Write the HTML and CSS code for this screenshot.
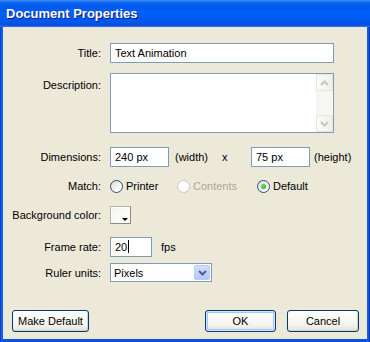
FILE: index.html
```html
<!DOCTYPE html>
<html lang="en">
<head>
    <meta charset="UTF-8">
    <meta name="viewport" content="width=device-width, initial-scale=1.0">
    <title>Document Properties</title>
    <link rel="stylesheet" href="styles.css">
</head>
<body>
    <div class="window">
        <div class="titlebar">Document Properties</div>

        <div class="client">
            <div class="row row-title">
                <span class="label">Title:</span>
                <div class="field wide">Text Animation</div>
            </div>

            <div class="row row-desc">
                <span class="label label-top">Description:</span>
                <div class="field wide area">
                    <div class="scrollbar">
                        <div class="sb-btn">
                            <svg width="9" height="6" viewBox="0 0 9 6"><path d="M1 5 L4.5 1.5 L8 5" fill="none" stroke="#c9c7ba" stroke-width="2"/></svg>
                        </div>
                        <div class="sb-track"></div>
                        <div class="sb-btn">
                            <svg width="9" height="6" viewBox="0 0 9 6"><path d="M1 1 L4.5 4.5 L8 1" fill="none" stroke="#c9c7ba" stroke-width="2"/></svg>
                        </div>
                    </div>
                </div>
            </div>

            <div class="row row-dim">
                <span class="label">Dimensions:</span>
                <div class="field small">240 px</div>
                <span class="unit">(width)</span>
                <span class="times">x</span>
                <div class="field small">75 px</div>
                <span class="unit-h">(height)</span>
            </div>

            <div class="row row-match">
                <span class="label">Match:</span>
                <div class="option opt-printer">
                    <span class="radio"></span>Printer
                </div>
                <div class="option opt-contents disabled">
                    <span class="radio"></span>Contents
                </div>
                <div class="option">
                    <span class="radio checked"></span>Default
                </div>
            </div>

            <div class="row row-bg">
                <span class="label">Background color:</span>
                <div class="swatch"><span class="swatch-arrow"></span></div>
            </div>

            <div class="row row-fps">
                <span class="label">Frame rate:</span>
                <div class="field tiny">20<span class="caret"></span></div>
                <span class="fps">fps</span>
            </div>

            <div class="row row-ruler">
                <span class="label">Ruler units:</span>
                <div class="select">
                    <span class="select-text">Pixels</span>
                    <span class="select-btn">
                        <svg width="9" height="6" viewBox="0 0 9 6"><path d="M1 1 L4.5 4.5 L8 1" fill="none" stroke="#4d6185" stroke-width="2"/></svg>
                    </span>
                </div>
            </div>

            <div class="buttons">
                <div class="btn btn-make">Make Default</div>
                <div class="btn-group">
                    <div class="btn btn-ok">OK</div>
                    <div class="btn btn-cancel">Cancel</div>
                </div>
            </div>
        </div>
    </div>
</body>
</html>
```

FILE: styles.css
```css
body {
    margin: 0;
    font-family: "Liberation Sans", Arial, sans-serif;
    font-size: 11px;
    color: #000;
    background-color: #ece9d8;
}

.window {
    width: 370px;
    height: 342px;
    display: flex;
    flex-direction: column;
    background: linear-gradient(to right, #0831d9 0, #166aee 2px, #0855dd 3px, #0855dd 367px, #166aee 368px, #0022a8 370px);
}

.titlebar {
    height: 27px;
    line-height: 28px;
    padding-left: 6px;
    color: #fff;
    font-weight: bold;
    font-size: 13px;
    text-shadow: 1px 1px #0a1883;
    background: linear-gradient(#3b8cf5 0, #0a62ec 3px, #0058ee 7px, #0061f8 45%, #0057ec 80%, #0a4fe0 92%, #2f71f0 100%);
}

.client {
    flex: 1;
    margin: 0 3px 3px 3px;
    background-color: #ece9d8;
    padding-top: 16px;
    display: flex;
    flex-direction: column;
}

.row {
    display: flex;
    align-items: center;
}

.label {
    width: 98px;
    margin-right: 9px;
    text-align: right;
    white-space: nowrap;
}

.label-top {
    align-self: flex-start;
    padding-top: 6px;
}

.field {
    box-sizing: border-box;
    height: 20px;
    line-height: 18px;
    padding-left: 4px;
    border: 1px solid #7f9db9;
    background-color: #fff;
    white-space: nowrap;
}

.wide {
    width: 224px;
}

.small {
    width: 59px;
}

.tiny {
    width: 42px;
}

.area {
    position: relative;
    height: 60px;
}

.scrollbar {
    position: absolute;
    top: 0;
    right: 0;
    bottom: 0;
    width: 17px;
    display: flex;
    flex-direction: column;
    background-color: #f7f6f1;
}

.sb-btn {
    box-sizing: border-box;
    height: 17px;
    border: 1px solid #e8e6dc;
    border-radius: 2px;
    background: linear-gradient(to right, #fbfbf8, #f1efe7);
    display: flex;
    align-items: center;
    justify-content: center;
}

.sb-track {
    flex: 1;
}

.row-title {
    height: 20px;
}

.row-desc {
    margin-top: 10px;
}

.row-dim {
    margin-top: 14px;
}

.unit {
    width: 53px;
    padding-left: 6px;
    box-sizing: border-box;
}

.times {
    width: 29px;
}

.unit-h {
    margin-left: 4px;
}

.row-match {
    margin-top: 11px;
    height: 16px;
}

.option {
    display: flex;
    align-items: center;
}

.opt-printer {
    width: 67px;
}

.opt-contents {
    width: 80px;
}

.radio {
    box-sizing: border-box;
    width: 13px;
    height: 13px;
    margin-right: 3px;
    border: 1px solid #1c5180;
    border-radius: 50%;
    background: linear-gradient(135deg, #dcd9ce, #fff 80%);
    display: flex;
    align-items: center;
    justify-content: center;
}

.radio.checked::after {
    content: "";
    width: 5px;
    height: 5px;
    border-radius: 50%;
    background: radial-gradient(circle at 40% 40%, #62e25c, #21a121);
}

.disabled {
    color: #aca899;
}

.disabled .radio {
    border-color: #cac8bb;
    background: #fff;
}

.row-bg {
    margin-top: 12px;
}

.swatch {
    position: relative;
    box-sizing: border-box;
    width: 21px;
    height: 18px;
    border: 1px solid #b5b2a2;
    border-right-color: #8f8c7e;
    border-bottom-color: #8f8c7e;
    background: linear-gradient(135deg, #f4f3ee, #fff);
    box-shadow: inset 1px 1px #fff;
}

.swatch-arrow {
    position: absolute;
    right: 2px;
    bottom: 2px;
    width: 0;
    height: 0;
    border-left: 3px solid transparent;
    border-right: 3px solid transparent;
    border-top: 3px solid #000;
}

.row-fps {
    margin-top: 13px;
}

.caret {
    display: inline-block;
    width: 1px;
    height: 13px;
    margin-left: 1px;
    vertical-align: -2px;
    background-color: #000;
}

.fps {
    margin-left: 9px;
}

.row-ruler {
    margin-top: 6px;
}

.select {
    box-sizing: border-box;
    width: 102px;
    height: 19px;
    border: 1px solid #7f9db9;
    background-color: #fff;
    display: flex;
    align-items: center;
    justify-content: space-between;
}

.select-text {
    padding-left: 3px;
}

.select-btn {
    box-sizing: border-box;
    width: 16px;
    height: 15px;
    margin-right: 1px;
    border: 1px solid #b9ccf9;
    border-radius: 2px;
    background: linear-gradient(#d2defb, #b4c8f6);
    display: flex;
    align-items: center;
    justify-content: center;
}

.buttons {
    margin-top: auto;
    margin-bottom: 7px;
    padding: 0 8px 0 9px;
    display: flex;
    justify-content: space-between;
}

.btn-group {
    display: flex;
    gap: 11px;
}

.btn {
    box-sizing: border-box;
    height: 22px;
    line-height: 20px;
    text-align: center;
    border: 1px solid #003c74;
    border-radius: 3px;
    background: linear-gradient(#ffffff, #f5f4ee 70%, #e3e0d6);
    box-shadow: inset -1px -1px #d6d0c5;
}

.btn-make {
    width: 77px;
}

.btn-ok {
    width: 71px;
    box-shadow: inset 0 0 0 1px #cee7ff, inset 0 0 0 2px #a9c6f3;
}

.btn-cancel {
    width: 72px;
}
```
